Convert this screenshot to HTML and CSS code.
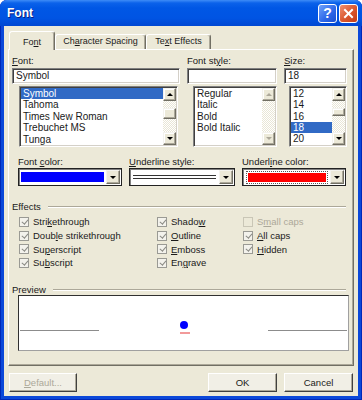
FILE: index.html
```html
<!DOCTYPE html>
<html lang="en">
<head>
    <meta charset="UTF-8">
    <title>Font</title>
    <link rel="stylesheet" href="styles.css">
</head>
<body>
<div class="window">
    <div class="titlebar">
        <span class="title">Font</span>
        <span class="tb-btn help">?</span>
        <span class="tb-btn close">
            <svg width="11" height="11" viewBox="0 0 11 11"><path d="M2 2 L9 9 M9 2 L2 9" stroke="#fff" stroke-width="2" stroke-linecap="square"/></svg>
        </span>
    </div>
    <div class="dialog">
        <div class="tabs">
            <span class="tab active">Fo<u>n</u>t</span>
            <span class="tab tab-spacing">Ch<u>a</u>racter Spacing</span>
            <span class="tab tab-effects">Te<u>x</u>t Effects</span>
        </div>
        <div class="panel">
            <div class="font-row">
                <div class="col">
                    <div class="label"><u>F</u>ont:</div>
                    <div class="textbox">Symbol</div>
                    <div class="listbox list-font">
                        <ul class="items">
                            <li class="selected">Symbol</li>
                            <li>Tahoma</li>
                            <li>Times New Roman</li>
                            <li>Trebuchet MS</li>
                            <li>Tunga</li>
                        </ul>
                        <div class="sb">
                            <span class="sb-btn up"></span>
                            <span class="sb-gap" style="height:7px"></span>
                            <span class="sb-thumb" style="height:11px"></span>
                            <span class="sb-fill"></span>
                            <span class="sb-btn down"></span>
                        </div>
                    </div>
                </div>
                <div class="col">
                    <div class="label">Font st<u>y</u>le:</div>
                    <div class="textbox"></div>
                    <div class="listbox list-style">
                        <ul class="items small">
                            <li>Regular</li>
                            <li>Italic</li>
                            <li>Bold</li>
                            <li>Bold Italic</li>
                        </ul>
                        <div class="sb">
                            <span class="sb-btn up off"></span>
                            <span class="sb-fill"></span>
                            <span class="sb-btn down off"></span>
                        </div>
                    </div>
                </div>
                <div class="col">
                    <div class="label"><u>S</u>ize:</div>
                    <div class="textbox">18</div>
                    <div class="listbox list-size">
                        <ul class="items small">
                            <li>12</li>
                            <li>14</li>
                            <li>16</li>
                            <li class="selected">18</li>
                            <li>20</li>
                        </ul>
                        <div class="sb">
                            <span class="sb-btn up"></span>
                            <span class="sb-gap" style="height:7px"></span>
                            <span class="sb-thumb" style="height:8px"></span>
                            <span class="sb-fill"></span>
                            <span class="sb-btn down"></span>
                        </div>
                    </div>
                </div>
            </div>

            <div class="color-row">
                <div class="col">
                    <div class="label">Font <u>c</u>olor:</div>
                    <div class="combo">
                        <span class="swatch blue"></span>
                        <span class="drop-btn"></span>
                    </div>
                </div>
                <div class="col">
                    <div class="label"><u>U</u>nderline style:</div>
                    <div class="combo">
                        <span class="double-line"></span>
                        <span class="drop-btn"></span>
                    </div>
                </div>
                <div class="col">
                    <div class="label">Underl<u>i</u>ne color:</div>
                    <div class="combo">
                        <span class="focus"><span class="swatch red"></span></span>
                        <span class="drop-btn"></span>
                    </div>
                </div>
            </div>

            <div class="group-head effects-head">
                <span>Effects</span>
                <span class="etch"></span>
            </div>
            <div class="checks">
                <label class="check"><span class="cb on"></span>Stri<u>k</u>ethrough</label>
                <label class="check"><span class="cb on"></span>Shado<u>w</u></label>
                <label class="check off"><span class="cb"></span>S<u>m</u>all caps</label>
                <label class="check"><span class="cb on"></span>Doub<u>l</u>e strikethrough</label>
                <label class="check"><span class="cb on"></span><u>O</u>utline</label>
                <label class="check"><span class="cb on"></span><u>A</u>ll caps</label>
                <label class="check"><span class="cb on"></span>Su<u>p</u>erscript</label>
                <label class="check"><span class="cb on"></span><u>E</u>mboss</label>
                <label class="check"><span class="cb on"></span><u>H</u>idden</label>
                <label class="check"><span class="cb on"></span>Su<u>b</u>script</label>
                <label class="check"><span class="cb on"></span>En<u>g</u>rave</label>
            </div>

            <div class="group-head preview-head">
                <span>Preview</span>
                <span class="etch"></span>
            </div>
            <div class="preview">
                <div class="sample">
                    <span class="base-line"></span>
                    <span class="glyph">
                        <span class="dot"></span>
                        <span class="uline"></span>
                    </span>
                    <span class="base-line"></span>
                </div>
            </div>
        </div>
        <div class="buttons">
            <span class="btn disabled"><u>D</u>efault...</span>
            <span class="btn ok">OK</span>
            <span class="btn">Cancel</span>
        </div>
    </div>
</div>
</body>
</html>
```

FILE: styles.css
```css
* {
    box-sizing: border-box;
}
body {
    margin: 0;
    background-color: #fff;
    font-family: "Liberation Sans", Arial, sans-serif;
    font-size: 9.5px;
    color: #1a1a1a;
}
u {
    text-decoration: underline;
    text-underline-offset: 1px;
}

/* window frame */
.window {
    width: 362px;
    height: 400px;
    display: flex;
    flex-direction: column;
    padding: 0 4px 4px;
    background-color: #0b48d9;
    box-shadow: inset 1px 0 #0028b8, inset -1px 0 #0028b8, inset 0 -1px #0028b8;
    border-radius: 7px 7px 0 0;
}
.titlebar {
    height: 26px;
    margin: 0 -4px;
    padding: 0 4px 0 7px;
    display: flex;
    align-items: center;
    gap: 2px;
    border-radius: 7px 7px 0 0;
    background: linear-gradient(#3e8cf7 0, #0b62ea 3px, #0057e5 8px, #0054e3 18px, #0047d2 26px);
}
.title {
    flex: 1;
    color: #fff;
    font-weight: bold;
    font-size: 12px;
    text-shadow: 1px 1px #0a1e80;
}
.tb-btn {
    width: 19px;
    height: 19px;
    border: 1px solid #fff;
    border-radius: 3px;
    display: flex;
    align-items: center;
    justify-content: center;
    color: #fff;
}
.help {
    background: linear-gradient(135deg, #6fa2fb, #2b66e8 60%, #1b4fd0);
    font-weight: bold;
    font-size: 14px;
}
.close {
    background: linear-gradient(135deg, #f09070, #d9552c 55%, #c23d17);
}

/* dialog body */
.dialog {
    flex: 1;
    display: flex;
    flex-direction: column;
    padding: 5px 4px 0;
    background-color: #ece9d8;
}
.tabs {
    display: flex;
    align-items: flex-end;
    height: 19px;
    padding-left: 1px;
    margin-bottom: -1px;
    position: relative;
    z-index: 1;
}
.tab {
    height: 15px;
    margin-bottom: 1px;
    line-height: 13px;
    text-align: center;
    font-size: 9px;
    background-color: #ece9d8;
    border: 1px solid;
    border-color: #fff #716f64 transparent #fff;
    border-bottom: none;
    border-radius: 3px 3px 0 0;
    box-shadow: inset -1px 0 #aca899;
}
.tab.active {
    width: 46px;
    height: 19px;
    margin-bottom: 0;
    line-height: 20px;
}
.tab-spacing {
    width: 91px;
}
.tab-effects {
    width: 65px;
}
.panel {
    height: 317px;
    padding: 5px 5px 0 3px;
    border: 1px solid;
    border-color: #fff #716f64 #716f64 #fff;
    box-shadow: inset -1px -1px #aca899;
}

/* font / style / size */
.font-row {
    display: grid;
    grid-template-columns: 168px 90px 63px;
    column-gap: 7px;
}
.label {
    height: 12px;
    line-height: 12px;
    white-space: nowrap;
}
.textbox {
    height: 16px;
    margin-top: 1px;
    padding-left: 3px;
    line-height: 14px;
    font-size: 10px;
    background-color: #fff;
    border: 1px solid;
    border-color: #808080 #fff #fff #808080;
    box-shadow: inset 1px 1px #404040, inset -1px -1px #d4d0c8;
}
.listbox {
    height: 61px;
    margin-top: 2px;
    display: flex;
    padding: 1px 1px 1px 1px;
    background-color: #fff;
    border: 1px solid;
    border-color: #808080 #fff #fff #808080;
    box-shadow: inset 1px 1px #404040, inset -1px -1px #d4d0c8;
}
.list-font {
    margin-left: 7px;
    width: 159px;
}
.list-style {
    margin-left: 6px;
    width: 84px;
}
.list-size {
    margin-left: 5px;
    width: 58px;
}
.items {
    flex: 1;
    list-style: none;
    margin: 0;
    padding: 0;
    overflow: hidden;
    font-size: 10px;
}
.items li {
    height: 11.4px;
    line-height: 11px;
    padding-left: 2px;
    white-space: nowrap;
}
.items.small li {
    height: 11.3px;
    line-height: 11px;
}
.items .selected {
    background-color: #316ac5;
    color: #fff;
}

/* classic scrollbar */
.sb {
    width: 13px;
    display: flex;
    flex-direction: column;
    background: repeating-conic-gradient(#fff 0 25%, #e9e6d6 0 50%) 0 0 / 2px 2px;
}
.sb-btn,
.sb-thumb {
    background-color: #ece9d8;
    border: 1px solid;
    border-color: #f4f3ee #716f64 #716f64 #f4f3ee;
    box-shadow: inset -1px -1px #aca899, inset 1px 1px #fff;
}
.sb-btn {
    height: 13px;
    display: flex;
    align-items: center;
    justify-content: center;
}
.sb-btn::after {
    content: "";
    border-left: 3px solid transparent;
    border-right: 3px solid transparent;
}
.sb-btn.up::after {
    border-bottom: 3px solid #000;
}
.sb-btn.down::after {
    border-top: 3px solid #000;
}
.sb-btn.off.up::after {
    border-bottom-color: #aca899;
}
.sb-btn.off.down::after {
    border-top-color: #aca899;
}
.sb-fill {
    flex: 1;
}

/* colour combos */
.color-row {
    display: grid;
    grid-template-columns: 104px 106px 104px;
    column-gap: 7px;
    margin: 9px 0 0 6px;
}
.color-row .label {
    height: 11px;
    line-height: 12px;
}
.combo {
    height: 18px;
    margin-top: 1px;
    display: flex;
    align-items: stretch;
    background-color: #fff;
    border: 1px solid #222;
    box-shadow: inset 1px 1px #808080;
    padding: 1px;
}
.swatch {
    flex: 1;
    margin: 2px 2px 2px 1px;
}
.blue {
    background-color: #0000ff;
}
.red {
    margin: 1px;
    background-color: #ff0000;
}
.focus {
    flex: 1;
    display: flex;
    margin: 1px 2px 0 2px;
    border: 1px dotted #555;
}
.double-line {
    flex: 1;
    margin: 5px 3px 0 2px;
    height: 4px;
    border-top: 1px solid #333;
    border-bottom: 1px solid #333;
}
.drop-btn {
    width: 14px;
    display: flex;
    align-items: center;
    justify-content: center;
    background-color: #ece9d8;
    border: 1px solid;
    border-color: #f4f3ee #716f64 #716f64 #f4f3ee;
    box-shadow: inset -1px -1px #aca899;
}
.drop-btn::after {
    content: "";
    border-left: 3px solid transparent;
    border-right: 3px solid transparent;
    border-top: 3px solid #000;
}

/* group headers */
.group-head {
    display: flex;
    align-items: center;
    height: 12px;
    line-height: 12px;
}
.effects-head {
    margin-top: 15px;
}
.preview-head {
    margin-top: 15px;
    height: 10px;
}
.etch {
    flex: 1;
    margin: 0 2px 0 7px;
    height: 2px;
    border-top: 1px solid #aca899;
    border-bottom: 1px solid #fff;
}

/* effects checkboxes */
.checks {
    display: grid;
    grid-template-columns: 138px 86px 1fr;
    grid-auto-rows: 13.7px;
    margin: 2px 0 0 7px;
}
.check {
    display: flex;
    align-items: center;
    white-space: nowrap;
}
.check.off {
    color: #aca899;
}
.cb {
    width: 10px;
    height: 10px;
    margin-right: 4px;
    border: 1px solid #9a9a94;
    background-color: #f3f2ec;
    position: relative;
}
.check.off .cb {
    border-color: #c9c6b6;
    background-color: #ece9d8;
}
.cb.on::after {
    content: "";
    position: absolute;
    left: 2.5px;
    top: 0;
    width: 2.5px;
    height: 5px;
    border-right: 1.5px solid #8a8a84;
    border-bottom: 1.5px solid #8a8a84;
    transform: rotate(40deg);
}

/* preview */
.preview {
    width: 331px;
    height: 56px;
    margin-left: 6px;
    background-color: #fff;
    border: 1px solid;
    border-color: #303030 #a0a0a0 #a0a0a0 #303030;
}
.sample {
    display: flex;
    height: 14px;
    margin-top: 25px;
    padding: 0 1px;
}
.base-line {
    width: 79px;
    height: 1px;
    margin-top: 9px;
    background-color: #8c8c8c;
}
.glyph {
    flex: 1;
    display: flex;
    flex-direction: column;
    align-items: center;
}
.dot {
    width: 8px;
    height: 8px;
    border-radius: 50%;
    background-color: #0000ff;
}
.uline {
    width: 10px;
    height: 2px;
    margin-top: 3px;
    margin-left: 2px;
    background-color: #f29a9a;
}

/* bottom buttons */
.buttons {
    display: flex;
    gap: 7px;
    margin-top: 7px;
    padding: 0 1px;
}
.btn {
    width: 69px;
    height: 19px;
    line-height: 17px;
    text-align: center;
    background-color: #f1efe6;
    border: 1px solid;
    border-color: #fff #404040 #404040 #fff;
    box-shadow: inset -1px -1px #aca899;
}
.btn.disabled {
    width: 68px;
    color: #aca899;
}
.btn.ok {
    margin-left: auto;
}
```
